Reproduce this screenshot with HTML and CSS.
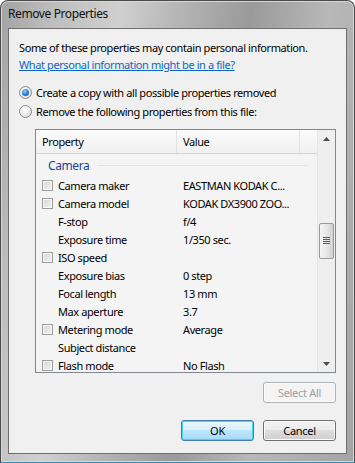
FILE: index.html
```html
<!DOCTYPE html>
<html>

<head>
    <meta name="viewport" content="width=device-width, initial-scale=1">
    <title>Remove Properties</title>
    <link rel="stylesheet" href="styles.css">
</head>

<body>
    <div class="window">
        <div class="titlebar">Remove Properties</div>

        <div class="client">
            <div class="intro">Some of these properties may contain personal information.</div>
            <a class="link" href="#">What personal information might be in a file?</a>

            <div class="options">
                <label class="option">
                    <span class="radio checked"></span>
                    Create a copy with all possible properties removed
                </label>
                <label class="option">
                    <span class="radio"></span>
                    Remove the following properties from this file:
                </label>
            </div>

            <div class="listbox">
                <div class="list-main">
                    <div class="header">
                        <div class="col col-prop">Property</div>
                        <div class="col col-value">Value</div>
                        <div class="col col-fill"></div>
                    </div>
                    <div class="rows">
                        <div class="group">
                            <span>Camera</span>
                            <span class="group-line"></span>
                        </div>
                        <div class="row"><span class="check"></span><span class="name">Camera maker</span><span class="value">EASTMAN KODAK C...</span></div>
                        <div class="row"><span class="check"></span><span class="name">Camera model</span><span class="value">KODAK DX3900 ZOO...</span></div>
                        <div class="row"><span class="nocheck"></span><span class="name">F-stop</span><span class="value">f/4</span></div>
                        <div class="row"><span class="nocheck"></span><span class="name">Exposure time</span><span class="value">1/350 sec.</span></div>
                        <div class="row"><span class="check"></span><span class="name">ISO speed</span><span class="value"></span></div>
                        <div class="row"><span class="nocheck"></span><span class="name">Exposure bias</span><span class="value">0 step</span></div>
                        <div class="row"><span class="nocheck"></span><span class="name">Focal length</span><span class="value">13 mm</span></div>
                        <div class="row"><span class="nocheck"></span><span class="name">Max aperture</span><span class="value">3.7</span></div>
                        <div class="row"><span class="check"></span><span class="name">Metering mode</span><span class="value">Average</span></div>
                        <div class="row"><span class="nocheck"></span><span class="name">Subject distance</span><span class="value"></span></div>
                        <div class="row"><span class="check"></span><span class="name">Flash mode</span><span class="value">No Flash</span></div>
                    </div>
                </div>
                <div class="scrollbar">
                    <div class="arrow">
                        <svg width="7" height="4" viewBox="0 0 7 4"><path d="M0 4 L3.5 0 L7 4 Z" fill="#4d4d4d"/></svg>
                    </div>
                    <div class="track">
                        <div class="thumb">
                            <svg width="7" height="8" viewBox="0 0 7 8">
                                <path d="M0 0.5 H7 M0 2.5 H7 M0 4.5 H7 M0 6.5 H7" stroke="#5a5a5a" stroke-width="1"/>
                            </svg>
                        </div>
                    </div>
                    <div class="arrow">
                        <svg width="7" height="4" viewBox="0 0 7 4"><path d="M0 0 L3.5 4 L7 0 Z" fill="#4d4d4d"/></svg>
                    </div>
                </div>
            </div>

            <div class="select-row">
                <button class="btn" disabled>Select All</button>
            </div>

            <div class="footer">
                <button class="btn default">OK</button>
                <button class="btn">Cancel</button>
            </div>
        </div>
    </div>
</body>

</html>
```

FILE: styles.css
```css
html,
body {
    margin: 0;
    padding: 0;
    background: #ffffff;
}

body {
    font-family: "Noto Sans", "Open Sans", sans-serif;
    font-size: 11px;
    letter-spacing: -0.4px;
    color: #000;
}

.window {
    width: 355px;
    height: 463px;
    box-sizing: border-box;
    display: flex;
    flex-direction: column;
    padding: 0 7px 8px 7px;
    border: 1px solid #4a4a4a;
    border-bottom-color: #2a8fb5;
    border-radius: 8px 8px 0 0;
    background: linear-gradient(100deg, #a2a2a2 0%, #bdbdbd 12%, #d0d0d0 28%, #b4b4b4 42%, #9a9a9a 58%, #b8b8b8 76%, #a4a4a4 100%);
    box-shadow: inset 0 0 0 1px #d8d8d8;
}

.titlebar {
    height: 27px;
    line-height: 26px;
    padding-left: 0;
    font-size: 12px;
    color: #111;
}

.client {
    flex: 1;
    display: flex;
    flex-direction: column;
    background: #f0f0f0;
    border: 1px solid #6e6e6e;
    padding: 10px 10px 0 10px;
}

.intro {
    line-height: 17px;
}

.link {
    align-self: flex-start;
    color: #0b66c3;
    line-height: 17px;
}

.options {
    margin-top: 10px;
    display: flex;
    flex-direction: column;
}

.option {
    display: flex;
    align-items: center;
    gap: 4px;
    height: 19px;
}

.radio {
    width: 11px;
    height: 11px;
    border-radius: 50%;
    border: 1px solid #8a8a8a;
    background: radial-gradient(circle at 40% 35%, #ffffff 0%, #e2e2e2 70%, #cfcfcf 100%);
    position: relative;
}

.radio.checked::after {
    content: "";
    position: absolute;
    left: 2px;
    top: 2px;
    width: 7px;
    height: 7px;
    border-radius: 50%;
    background: radial-gradient(circle at 40% 35%, #8ad4ff 0%, #1a74c8 60%, #0c4f94 100%);
}

.listbox {
    margin: 8px 0 0 16px;
    height: 244px;
    box-sizing: border-box;
    border: 1px solid #828790;
    background: #f4f4f4;
    display: flex;
}

.list-main {
    flex: 1;
    display: flex;
    flex-direction: column;
    overflow: hidden;
}

.header {
    display: flex;
    flex: none;
    height: 23px;
    border-bottom: 1px solid #d5d5d5;
    background: linear-gradient(#fafafa, #f1f1f1);
}

.col {
    display: flex;
    align-items: center;
    padding-left: 6px;
    border-right: 1px solid #e2e2e2;
}

.col-prop {
    width: 134px;
}

.col-value {
    width: 116px;
}

.col-fill {
    flex: 1;
    border-right: none;
}

.rows {
    display: flex;
    flex-direction: column;
}

.group {
    display: flex;
    align-items: center;
    gap: 8px;
    height: 22px;
    flex: none;
    padding-left: 12px;
    padding-right: 9px;
    color: #1e3f9a;
    font-size: 12px;
}

.group-line {
    flex: 1;
    height: 1px;
    background: #dfe3ea;
}

.row {
    display: flex;
    flex: none;
    align-items: center;
    height: 18px;
    padding-left: 6px;
}

.check,
.nocheck {
    width: 11px;
    height: 11px;
    flex: none;
}

.check {
    box-sizing: border-box;
    border: 1px solid #9c9c9c;
    background: linear-gradient(135deg, #d5d5d5, #f4f4f4);
    box-shadow: inset 0 0 0 1px #f7f7f7;
}

.name {
    margin-left: 5px;
    width: 125px;
    flex: none;
}

.value {
    white-space: nowrap;
}

.scrollbar {
    width: 17px;
    display: flex;
    flex-direction: column;
    background: #efefef;
    border-left: 1px solid #e6e6e6;
}

.arrow {
    height: 17px;
    display: flex;
    align-items: center;
    justify-content: center;
}

.track {
    flex: 1;
    padding-top: 76px;
}

.thumb {
    margin: 0 1px;
    height: 36px;
    box-sizing: border-box;
    border: 1px solid #999;
    border-radius: 2px;
    background: linear-gradient(90deg, #f5f5f5, #e4e4e4 60%, #d0d0d0);
    display: flex;
    align-items: center;
    justify-content: center;
}

.select-row {
    display: flex;
    justify-content: flex-end;
    margin-top: 9px;
}

.footer {
    display: flex;
    justify-content: flex-end;
    gap: 9px;
    margin-top: 17px;
}

.btn {
    width: 73px;
    height: 21px;
    font-family: inherit;
    font-size: 11px;
    letter-spacing: -0.3px;
    color: #000;
    border: 1px solid #707070;
    border-radius: 3px;
    background: linear-gradient(#f2f2f2 0%, #ebebeb 49%, #dddddd 50%, #cfcfcf 100%);
    box-shadow: inset 0 0 0 1px #fcfcfc;
    padding: 0;
}

.btn:disabled {
    color: #a0a0a0;
    border-color: #adb2b5;
    background: #f4f4f4;
}

.btn.default {
    border-color: #3c7fb1;
    background: linear-gradient(#eaf6fd 0%, #d9f0fc 49%, #bee6fd 50%, #a7d9f5 100%);
    box-shadow: inset 0 0 0 1px #48d3fb;
}
```
